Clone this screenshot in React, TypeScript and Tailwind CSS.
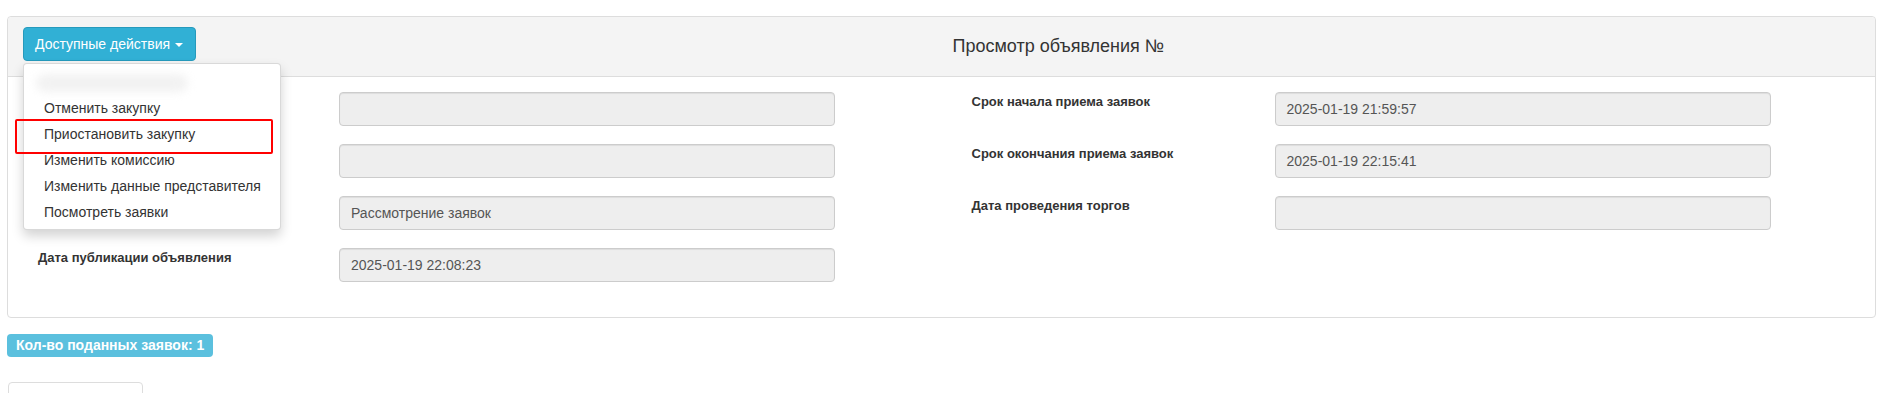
const font = { fontFamily: '"Liberation Sans", Arial, sans-serif' };

// labels of the first rows sit under the open dropdown in the screenshot
const leftRows = [
  { label: "", value: "" },
  { label: "", value: "" },
  { label: "", value: "Рассмотрение заявок" },
  { label: "Дата публикации объявления", value: "2025-01-19 22:08:23" },
];

const rightRows = [
  { label: "Срок начала приема заявок", value: "2025-01-19 21:59:57" },
  { label: "Срок окончания приема заявок", value: "2025-01-19 22:15:41" },
  { label: "Дата проведения торгов", value: "" },
];

const menuItems = [
  "Отменить закупку",
  "Приостановить закупку",
  "Изменить комиссию",
  "Изменить данные представителя",
  "Посмотреть заявки",
];

function Field({ label, value, labelW }: { label: string; value: string; labelW: string }) {
  return (
    <div className="flex items-start h-[34px] mb-[18px]">
      <div className={`${labelW} shrink-0 text-[13px] font-bold text-[#333] leading-[17px] pt-[1px]`}>{label}</div>
      <div className="w-[496px] h-[34px] shrink-0 rounded border border-[#ccc] bg-[#eeeeee] px-[11px] flex items-center text-[14px] text-[#555] shadow-[inset_0_1px_1px_rgba(0,0,0,0.075)]">
        {value}
      </div>
    </div>
  );
}

export default function App() {
  return (
    <div className="w-full h-[393px] bg-white overflow-hidden pt-[16px]" style={font}>
      <div className="ml-[7px] mr-[14px] border border-[#ddd] rounded h-[302px]">
        {/* header */}
        <div className="grid grid-cols-2 h-[60px] bg-[#f4f4f4] border-b border-[#ddd] rounded-t">
          <div className="relative pl-[15px] pt-[10px]">
            <button className="h-[34px] w-[173px] rounded bg-[#31b0d5] border border-[#269abc] text-white text-[14px] pl-[11px] flex items-center gap-[5px]">
              <span>Доступные действия</span>
              <span className="w-0 h-0 border-l-[4px] border-r-[4px] border-t-[4px] border-l-transparent border-r-transparent border-t-white mt-[1px]" />
            </button>
            <div className="absolute left-[15px] top-[46px] z-10 w-[258px] h-[167px] bg-white border border-[rgba(0,0,0,0.15)] rounded shadow-[0_6px_12px_rgba(0,0,0,0.175)] py-[5px]">
              <div className="h-[26px] flex items-center">
                <div className="ml-[12px] mt-[2px] h-[18px] w-[152px] rounded-full bg-[#f2f2f2] blur-[4px]" />
              </div>
              {menuItems.map((m) => (
                <div key={m} className="h-[26px] leading-[26px] pl-[20px] text-[14px] text-[#333] whitespace-nowrap">
                  {m}
                </div>
              ))}
              <div className="absolute -left-[9px] top-[55px] w-[258px] h-[35px] border-[2.5px] border-[#ff0000] rounded-[2px]" />
            </div>
          </div>
          <div className="pl-[11px] flex items-center text-[18px] text-[#333]">Просмотр объявления №</div>
        </div>
        {/* body */}
        <div className="grid grid-cols-2 pt-[15px]">
          <div className="pl-[30px]">
            {leftRows.map((r, i) => (
              <Field key={i} label={r.label} value={r.value} labelW="w-[301px]" />
            ))}
          </div>
          <div className="pl-[30px]">
            {rightRows.map((r) => (
              <Field key={r.label} label={r.label} value={r.value} labelW="w-[303px]" />
            ))}
          </div>
        </div>
      </div>
      <div className="mt-[16px] ml-[7px] inline-flex h-[23px] items-center rounded bg-[#5bc0de] px-[9px] text-[14px] font-bold text-white">
        Кол-во поданных заявок: 1
      </div>
      <div className="mt-[25px] ml-[8px] w-[135px] h-[20px] border border-[#ddd] rounded-t" />
    </div>
  );
}
